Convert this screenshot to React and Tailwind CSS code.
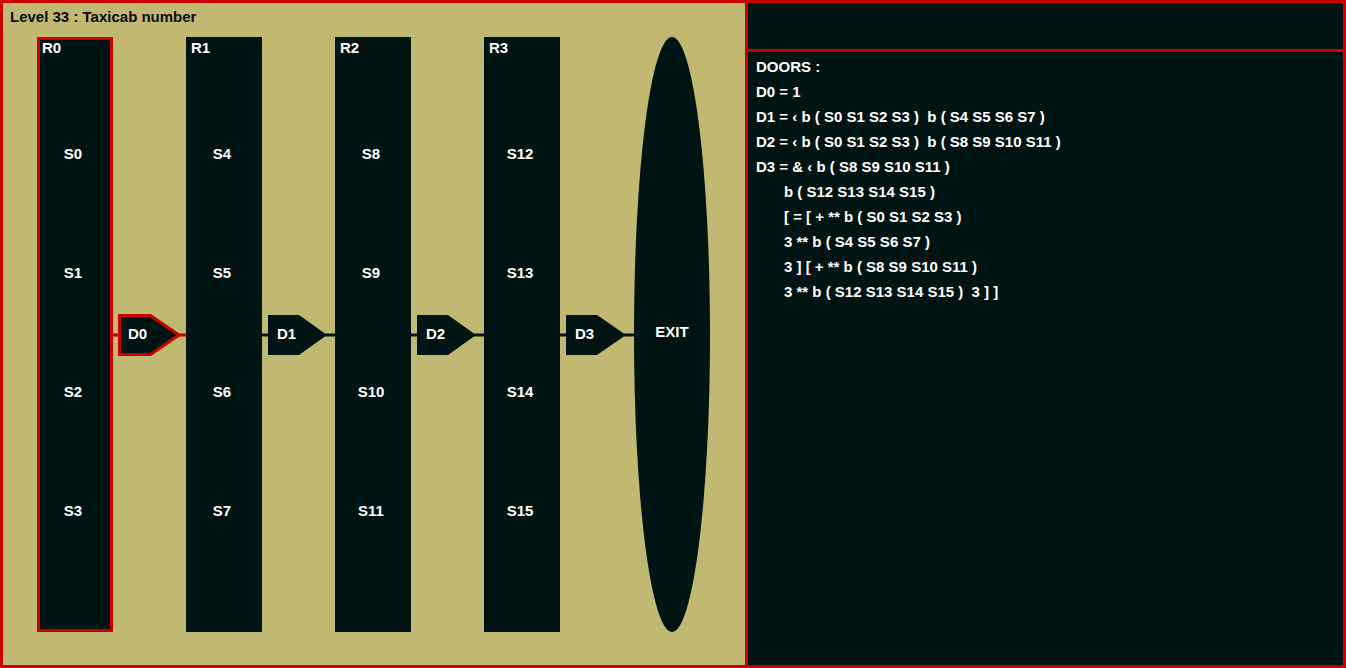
const RED = '#cc0000'

const rooms = [
  { name: 'R0', slots: ['S0', 'S1', 'S2', 'S3'], selected: true },
  { name: 'R1', slots: ['S4', 'S5', 'S6', 'S7'] },
  { name: 'R2', slots: ['S8', 'S9', 'S10', 'S11'] },
  { name: 'R3', slots: ['S12', 'S13', 'S14', 'S15'] },
]

const doors = [
  { name: 'D0', selected: true, w: 73 },
  { name: 'D1', w: 73 },
  { name: 'D2', w: 73 },
  { name: 'D3', w: 74 },
]

const lines = [
  { t: 'DOORS :' },
  { t: 'D0 = 1' },
  { t: 'D1 = ‹ b ( S0 S1 S2 S3 )  b ( S4 S5 S6 S7 )' },
  { t: 'D2 = ‹ b ( S0 S1 S2 S3 )  b ( S8 S9 S10 S11 )' },
  { t: 'D3 = & ‹ b ( S8 S9 S10 S11 )' },
  { t: 'b ( S12 S13 S14 S15 )', indent: true },
  { t: '[ = [ + ** b ( S0 S1 S2 S3 )', indent: true },
  { t: '3 ** b ( S4 S5 S6 S7 )', indent: true },
  { t: '3 ] [ + ** b ( S8 S9 S10 S11 )', indent: true },
  { t: '3 ** b ( S12 S13 S14 S15 )  3 ] ]', indent: true },
]

function Room({ room }) {
  return (
    <div
      className={
        'w-[76px] h-full flex flex-col bg-[#011414] border-[3px] text-white ' +
        (room.selected ? 'border-[#cc0000]' : 'border-[#011414]')
      }
    >
      <div className="pl-[2px] leading-[16px]">{room.name}</div>
      {room.slots.map((s, i) => (
        <div
          key={s}
          className={'leading-[16px] text-center pr-[4px] ' + (i === 0 ? 'mt-[90px]' : 'mt-[103px]')}
        >
          {s}
        </div>
      ))}
    </div>
  )
}

function Door({ door }) {
  const stroke = door.selected ? RED : '#011414'
  const tip = door.w - 8
  return (
    <div className="h-full flex items-center">
      <div className="relative h-[44px]" style={{ width: door.w }}>
        <svg width={door.w} height="44" className="absolute inset-0">
          <line x1="0" y1="22" x2="8" y2="22" stroke={stroke} strokeWidth="3" />
          <line x1={tip - 2} y1="22" x2={door.w} y2="22" stroke={stroke} strokeWidth="3" />
          {door.selected ? (
            <polygon
              points="6.5,2.5 37.5,2.5 66,22 37.5,41.5 6.5,41.5"
              fill="#011414"
              stroke={RED}
              strokeWidth="3"
            />
          ) : (
            <polygon points={`6,2 37,2 ${tip},22 37,42 6,42`} fill="#011414" />
          )}
        </svg>
        <div className="absolute left-[15px] top-[13px] leading-[16px] text-white">{door.name}</div>
      </div>
    </div>
  )
}

export default function App() {
  return (
    <div
      className="w-[1346px] h-[668px] flex border-[3px] border-[#cc0000] bg-[#011414] text-[15px] font-bold"
      style={{ fontFamily: '"Liberation Sans", Arial, sans-serif' }}
    >
      <div className="w-[742px] h-full bg-[#c1b872] flex flex-col">
        <div className="h-[34px] pt-[4px] pl-[7px] leading-[20px] text-[#0a0a0a]">Level 33 : Taxicab number</div>
        <div className="h-[595px] pl-[34px] flex">
          {rooms.map((r, i) => (
            <div key={r.name} className="flex h-full">
              <Room room={r} />
              <Door door={doors[i]} />
            </div>
          ))}
          <div className="w-[76px] h-full rounded-[50%] bg-[#011414] flex items-center justify-center pb-[5px] text-white">
            EXIT
          </div>
        </div>
      </div>
      <div className="flex-1 h-full flex flex-col border-l-[3px] border-[#cc0000]">
        <div className="h-[49px] border-b-[3px] border-[#cc0000]" />
        <div className="pt-[2px] pl-[8px] text-white">
          {lines.map((l, i) => (
            <div key={i} className={'leading-[25px] whitespace-pre ' + (l.indent ? 'pl-[28px]' : '')}>
              {l.t}
            </div>
          ))}
        </div>
      </div>
    </div>
  )
}
